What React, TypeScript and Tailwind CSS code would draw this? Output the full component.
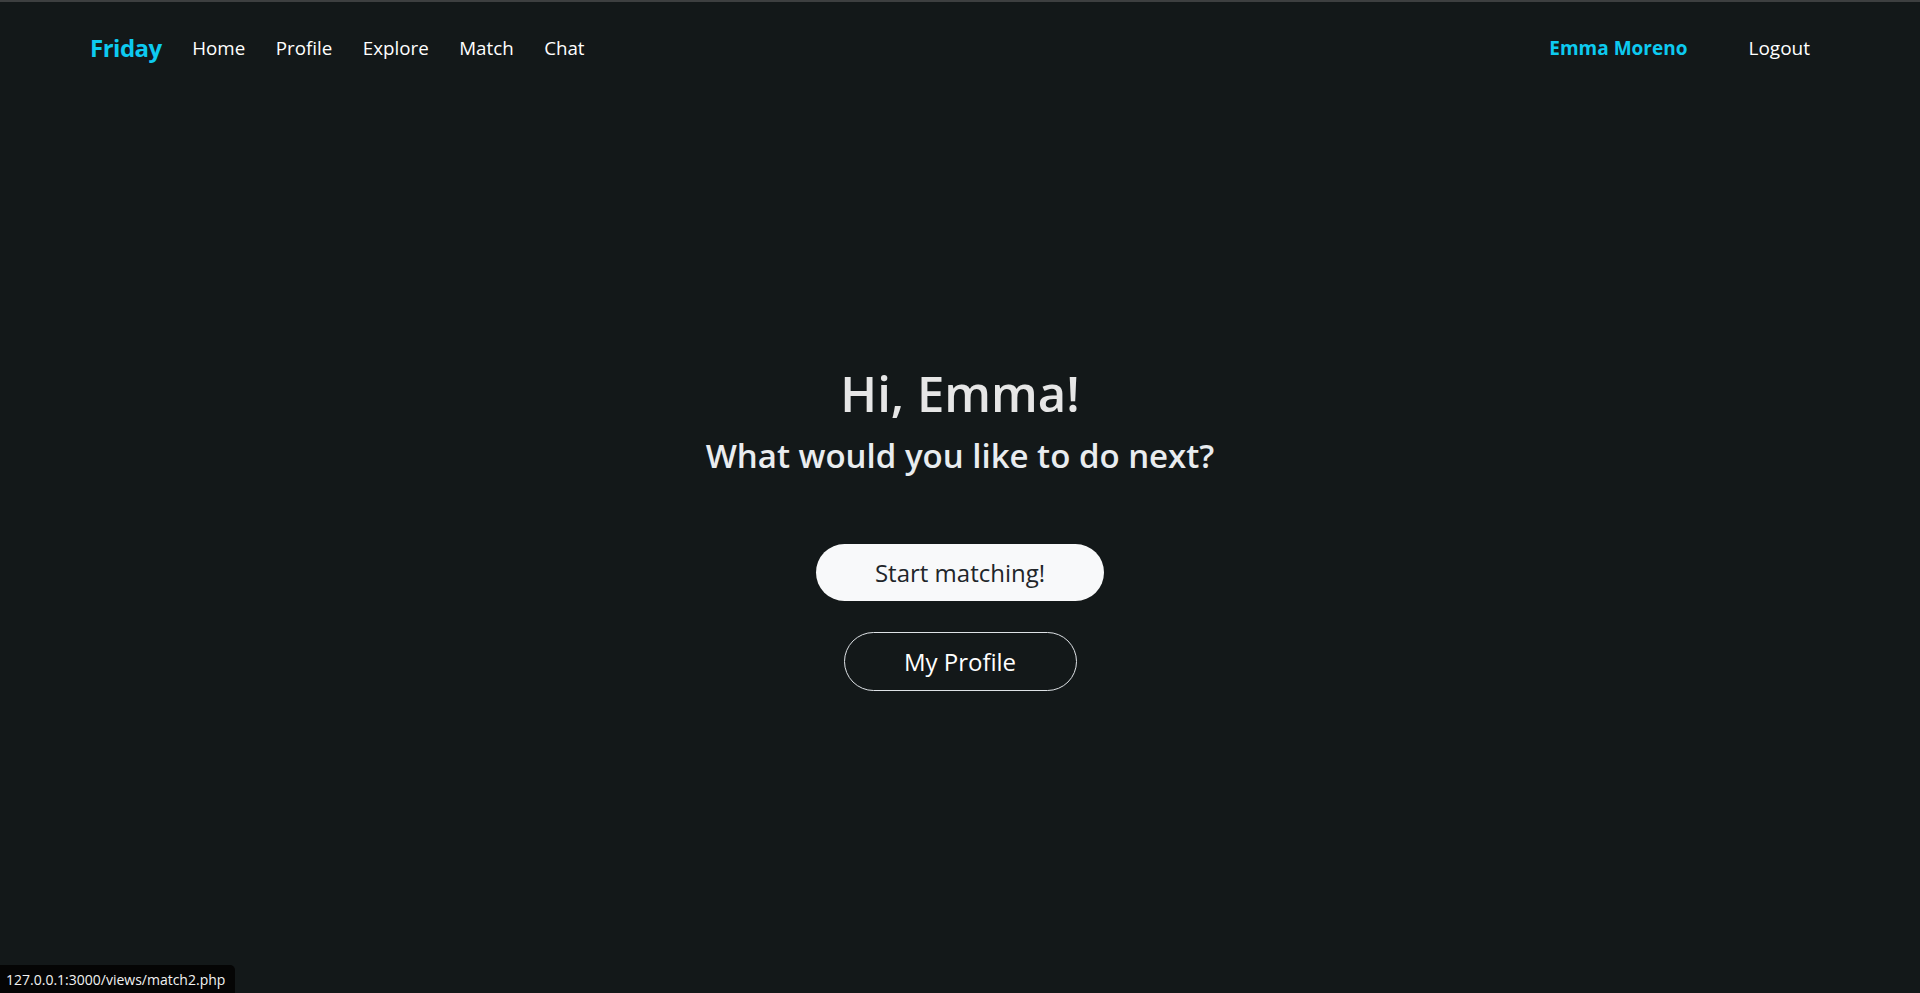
import React from 'react';

const NAV_LINKS = ['Home', 'Profile', 'Explore', 'Match', 'Chat'];

function NavBar() {
  return (
    <nav className="flex h-[92px] items-center justify-between pl-[90px] pr-[110px]">
      <div className="flex items-center gap-[30.5px]">
        <a className="text-[24px] font-bold tracking-[-0.5px] text-[#0dcaf0]">Friday</a>
        {NAV_LINKS.map((link) => (
          <a key={link} className="text-[18.75px] text-white">
            {link}
          </a>
        ))}
      </div>
      <div className="flex items-center gap-[61px]">
        <span className="text-[19px] font-bold text-[#0dcaf0]">Emma Moreno</span>
        <a className="text-[19px] text-white">Logout</a>
      </div>
    </nav>
  );
}

export default function App() {
  return (
    <div
      className="relative min-h-[993px] border-t-2 border-[#3d3f40] bg-[#131819]"
      style={{ fontFamily: '"Open Sans", "Noto Sans", sans-serif' }}
    >
      <NavBar />

      <main className="mt-[270px] flex flex-col items-center">
        <h1 className="text-[49px] font-semibold leading-[1.2] text-[#e6e6e6]">Hi, Emma!</h1>
        <h2 className="mt-[13px] text-[33px] font-semibold leading-[1.2] text-[#e9ecef]">
          What would you like to do next?
        </h2>

        <button className="mt-[69px] flex h-[57px] w-[288px] items-center justify-center rounded-full bg-[#f8f9fa] text-[24px] text-[#212529]">
          Start matching!
        </button>
        <button className="mt-[31px] flex h-[59px] w-[233px] items-center justify-center rounded-full border border-[#dee2e6] text-[24px] text-white">
          My Profile
        </button>
      </main>

      <div className="absolute bottom-0 left-0 flex h-[28px] w-[235px] items-center rounded-tr-[5px] bg-[#050505] pl-[6px] text-[14px] text-[#f2f2f2]">
        127.0.0.1:3000/views/match2.php
      </div>
    </div>
  );
}
